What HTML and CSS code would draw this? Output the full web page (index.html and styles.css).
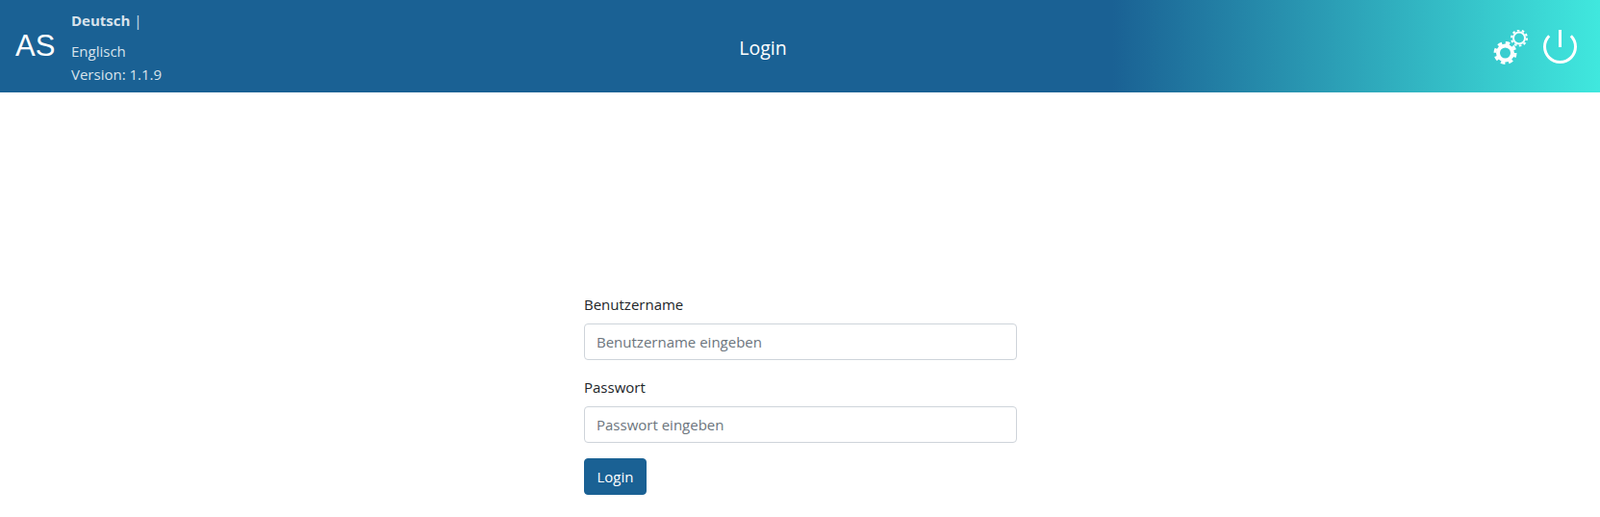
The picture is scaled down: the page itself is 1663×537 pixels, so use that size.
FILE: index.html
```html
<!DOCTYPE html>
<html>
<head>
<title>Login</title>
<meta content="width=device-width, initial-scale=1" name="viewport" />
<link rel="stylesheet" href="styles.css">
</head>

<body>
<div class='header'>
  <div class='brand'>
    <div class='logo'>AS</div>
    <div class='lang'>
      <div class='lang-row'><b>Deutsch</b> |</div>
      <div class='lang-row'>Englisch</div>
      <div class='version'>Version: 1.1.9</div>
    </div>
  </div>
  <div class='title'>Login</div>
  <div class='icons'>
    <svg class='ico-gears' width="36" height="36" viewBox="0 0 36 36">
      <g fill="none" stroke="#fff">
        <circle cx="12.5" cy="24" r="7.5" stroke-width="4"/>
        <circle cx="12.5" cy="24" r="10.5" stroke-width="3" stroke-dasharray="4.5 3.75"/>
        <circle cx="27" cy="8.5" r="6" stroke-width="2"/>
        <circle cx="27" cy="8.5" r="8" stroke-width="2" stroke-dasharray="2.6 2.43"/>
      </g>
    </svg>
    <svg class='ico-power' width="36" height="36" viewBox="0 0 36 36">
      <g fill="none" stroke="#fff" stroke-width="3">
        <path d="M17.5 0v18"/>
        <path d="M6.2 6.2a16 16 0 1 0 22.6 0"/>
      </g>
    </svg>
  </div>
</div>

<div class='container'>
  <form class='login-form'>
    <div class='form-group'>
      <label>Benutzername</label>
      <input type="text" class='form-control' placeholder="Benutzername eingeben">
    </div>
    <div class='form-group'>
      <label>Passwort</label>
      <input type="password" class='form-control' placeholder="Passwort eingeben">
    </div>
    <button type="button" class='btn'>Login</button>
  </form>
</div>
</body>

</html>
```

FILE: styles.css
```css
*, body {
  box-sizing: border-box;
}
body {
  margin: 0;
  padding: 0;
  font-family: "Open Sans", "Noto Sans", sans-serif;
  font-size: 15px;
  line-height: 24px;
  color: #212529;
  background-color: #fff;
}
.header {
  display: grid;
  grid-template-columns: 170px 1fr 247px;
  align-items: center;
  height: 96px;
  background: linear-gradient(to right, #1a6194 0%, #1a6194 69.5%, #40e8de 100%);
}
.brand {
  display: flex;
  align-items: center;
  padding-left: 16px;
  white-space: nowrap;
}
.logo {
  width: 58px;
  font-family: "Liberation Sans", Arial, sans-serif;
  font-size: 31px;
  color: #fff;
}
.lang {
  padding-top: 1px;
  color: #d8e3ec;
  font-size: 15px;
}
.lang-row {
  margin-bottom: 8px;
}
.lang-row + .lang-row {
  margin-bottom: 0;
}
.title {
  padding-top: 3px;
  text-align: center;
  color: #fff;
  font-size: 19.5px;
}
.icons {
  display: flex;
  justify-content: flex-end;
  gap: 16px;
  padding-top: 2px;
  padding-right: 23px;
}
.container {
  padding-top: 208px;
  padding-left: 607px;
}
.login-form {
  width: 450px;
}
.form-group {
  margin-bottom: 16px;
}
.form-group label {
  display: block;
  margin-bottom: 8px;
}
.form-control {
  display: block;
  width: 100%;
  height: 38px;
  padding: 6px 12px;
  font: inherit;
  color: #495057;
  border: 1px solid #ced4da;
  border-radius: 4px;
}
.form-control::placeholder {
  color: #6c757d;
  opacity: 1;
}
.btn {
  display: block;
  height: 38px;
  width: 65px;
  padding: 6px 0;
  font: inherit;
  color: #fff;
  background-color: #1a6194;
  border: 1px solid #1a6194;
  border-radius: 4px;
}
```
